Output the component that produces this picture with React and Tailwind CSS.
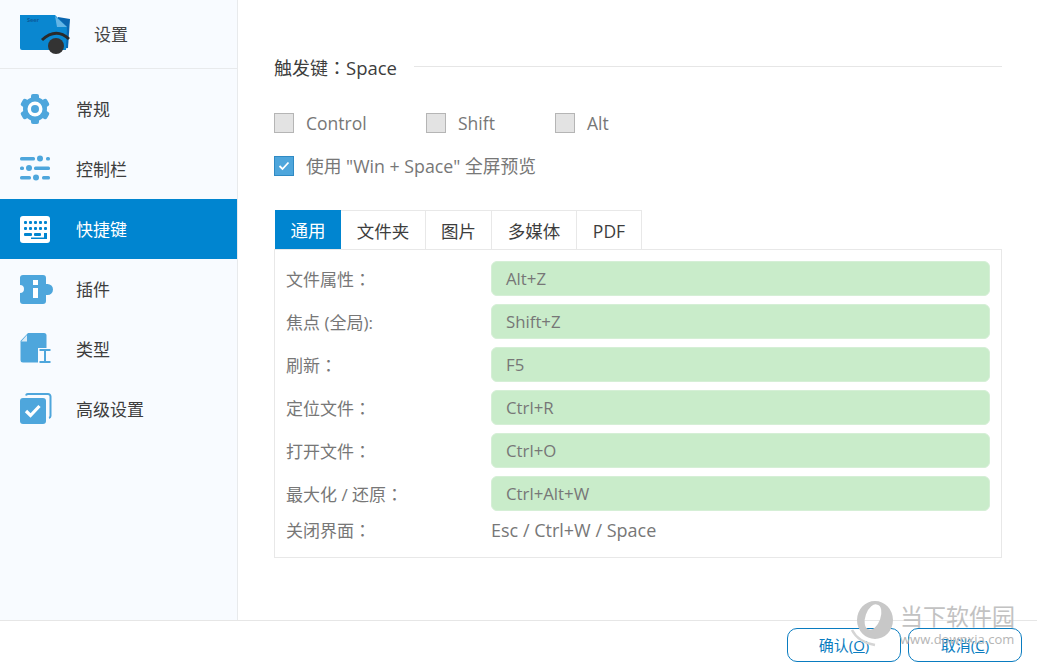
import React from "react";

const font = { fontFamily: '"Open Sans", "Noto Sans CJK SC", sans-serif' };

function GearIcon() {
  return (
    <svg width="32" height="32" viewBox="0 0 32 32">
      <g fill="#4ea6dc">
        {[0, 60, 120, 180, 240, 300].map((deg) => (
          <rect key={deg} x="12" y="1" width="8" height="8" rx="2" transform={`rotate(${deg} 16 16)`} />
        ))}
        <circle cx="16" cy="16" r="12" />
      </g>
      <circle cx="16" cy="16" r="7.500" fill="#fff" />
      <circle cx="16" cy="16" r="4" fill="#4ea6dc" />
    </svg>
  );
}

function SlidersIcon() {
  return (
    <svg width="32" height="32" viewBox="0 0 32 32" fill="#4ea6dc">
      <rect x="1" y="4" width="15" height="3.500" rx="1.500" />
      <circle cx="21" cy="5.500" r="3" />
      <rect x="27" y="4" width="4" height="3.500" rx="1.500" />
      <rect x="1" y="13.500" width="4" height="3.500" rx="1.500" />
      <circle cx="10" cy="15" r="3" />
      <rect x="15" y="13.500" width="16" height="3.500" rx="1.500" />
      <rect x="1" y="23" width="11" height="3.500" rx="1.500" />
      <circle cx="17" cy="24.500" r="3" />
      <rect x="23" y="23" width="8" height="3.500" rx="1.500" />
    </svg>
  );
}

function KeyboardIcon() {
  return (
    <svg width="32" height="32" viewBox="0 0 32 32">
      <rect x="1" y="3" width="30" height="27" rx="3" fill="#fff" />
      <g fill="#0085d0">
        <rect x="5" y="8" width="3" height="3" rx="1" />
        <rect x="10" y="8" width="3" height="3" rx="1" />
        <rect x="15" y="8" width="3" height="3" rx="1" />
        <rect x="20" y="8" width="3" height="3" rx="1" />
        <rect x="25" y="8" width="3" height="3" rx="1" />
        <rect x="5" y="14" width="3" height="3" rx="1" />
        <rect x="10" y="14" width="3" height="3" rx="1" />
        <rect x="15" y="14" width="3" height="3" rx="1" />
        <rect x="20" y="14" width="3" height="3" rx="1" />
        <rect x="25" y="14" width="3" height="3" rx="1" />
        <rect x="5" y="20" width="8" height="3" rx="1" />
        <rect x="15" y="20" width="7" height="3" rx="1" />
        <path d="M25 20h3v6h-16v-1.500h13z" />
      </g>
    </svg>
  );
}

function PuzzleIcon() {
  return (
    <svg width="34" height="32" viewBox="0 0 34 32">
      <path
        fill="#4ea6dc"
        d="M4 2h20a3 3 0 0 1 3 3v6h1.500a5.500 5.500 0 0 1 0 11H27v6a3 3 0 0 1-3 3H4a3 3 0 0 1-3-3v-8a4 4 0 0 0 0-8V5a3 3 0 0 1 3-3z"
      />
      <rect x="14" y="7" width="5" height="5" fill="#fff" />
      <rect x="14" y="15" width="5" height="10" fill="#fff" />
    </svg>
  );
}

function FileTypeIcon() {
  return (
    <svg width="34" height="32" viewBox="0 0 34 32">
      <path
        fill="#4ea6dc"
        d="M9 0h16a2.500 2.500 0 0 1 2.500 2.500V27a2.500 2.500 0 0 1-2.500 2.500H4A2.500 2.500 0 0 1 1.500 27V8z"
      />
      <path fill="#dcebf6" d="M8 2v6.500H2.200z" />
      <rect x="19" y="15" width="15" height="17" fill="#f8fbff" />
      <path fill="#4ea6dc" d="M20.500 16h11v2H27v10h4.500v2h-11v-2H25V18h-4.500z" />
    </svg>
  );
}

function CheckCopyIcon() {
  return (
    <svg width="34" height="32" viewBox="0 0 34 32">
      <path
        fill="none"
        stroke="#4ea6dc"
        strokeWidth="2"
        d="M7 2.500A2 2 0 0 1 9 1h20a2.500 2.500 0 0 1 2.500 2.500V23a2 2 0 0 1-1.500 2"
      />
      <rect x="1" y="5" width="26" height="26" rx="3" fill="#4ea6dc" />
      <path d="M7 18l4.500 4.500 9-9.500" fill="none" stroke="#fff" strokeWidth="3.200" />
    </svg>
  );
}

function LogoIcon() {
  return (
    <svg width="54" height="44" viewBox="0 0 54 44">
      <path fill="#0a66b0" d="M40 5l12 2-2 29-10 1z" />
      <path fill="#0a87d0" d="M2 3h35l12 12-1 23-44 0a2 2 0 0 1-2-2z" />
      <path fill="#64b5e6" d="M37 4l12 11H39z" />
      <text x="9" y="10" fontSize="5.500" fontWeight="700" fill="#0a5a9a">
        Seer
      </text>
      <path d="M24 28Q38 15 51 27" fill="none" stroke="#2a2a2a" strokeWidth="3" />
      <circle cx="38" cy="34" r="8" fill="#333" />
    </svg>
  );
}

function WatermarkLogo() {
  return (
    <svg width="44" height="50" viewBox="0 0 44 50">
      <path
        fill="#c8c8c8"
        fillRule="evenodd"
        d="M7 20A18 19 0 1 1 43 20A18 19 0 1 1 7 20zM27.400 4.800A7 13 20 1 0 18.600 29.200A7 13 20 1 0 27.400 4.800z"
      />
      <path d="M2 30Q8 42 25 45" fill="none" stroke="#d5d5d5" strokeWidth="2.500" />
    </svg>
  );
}

// centred full-width colon, the SC face pushes it to the left
function Colon() {
  return <span style={{ fontFamily: '"Noto Sans CJK TC", sans-serif' }}>：</span>;
}

const navItems = [
  { label: "常规", Icon: GearIcon },
  { label: "控制栏", Icon: SlidersIcon },
  { label: "快捷键", Icon: KeyboardIcon, active: true },
  { label: "插件", Icon: PuzzleIcon },
  { label: "类型", Icon: FileTypeIcon },
  { label: "高级设置", Icon: CheckCopyIcon },
];

const tabs = [
  { label: "通用", width: "w-[66px]", active: true },
  { label: "文件夹", width: "w-[85px]" },
  { label: "图片", width: "w-[66px]" },
  { label: "多媒体", width: "w-[85px]" },
  { label: "PDF", width: "w-[65px]" },
];

const shortcuts = [
  { label: "文件属性", colon: true, keys: "Alt+Z" },
  { label: "焦点 (全局):", keys: "Shift+Z" },
  { label: "刷新", colon: true, keys: "F5" },
  { label: "定位文件", colon: true, keys: "Ctrl+R" },
  { label: "打开文件", colon: true, keys: "Ctrl+O" },
  { label: "最大化 / 还原", colon: true, keys: "Ctrl+Alt+W" },
];

function Check({ label, width }) {
  return (
    <label className={`flex items-center ${width}`}>
      <span className="w-5 h-5 bg-[#e3e3e3] border border-[#b5b5b5]" />
      <span className="ml-3 text-[17.500px] text-[#777777]">{label}</span>
    </label>
  );
}

export default function App() {
  return (
    <div
      style={font}
      className="w-[1037px] h-[667px] flex flex-col bg-white overflow-hidden relative"
    >
      <div className="flex flex-1 min-h-0">
        {/* Sidebar */}
        <aside className="w-[238px] shrink-0 bg-[#f8fbff] border-r border-[#e8eaec]">
          <div className="h-[69px] flex items-center pl-[18px] border-b border-[#e8eaec]">
            <LogoIcon />
            <span className="ml-[22px] mt-[2px] text-[17px] text-[#444444]">设置</span>
          </div>
          <nav className="mt-[10px]">
            {navItems.map(({ label, Icon, active }) => (
              <div
                key={label}
                className={`h-[60px] flex items-center pl-[19px] ${
                  active ? "bg-[#0085d0] text-white" : "text-[#3d3d3d]"
                }`}
              >
                <span className="w-[57px] shrink-0 flex">
                  <Icon />
                </span>
                <span className="mt-[2px] text-[17px]">{label}</span>
              </div>
            ))}
          </nav>
        </aside>

        {/* Main */}
        <main className="flex-1 pl-9 pr-[35px] pt-[55px]">
          <div className="flex items-center h-[26px]">
            <span className="text-[18px] text-[#3d3d3d] whitespace-nowrap">
              触发键<Colon /><span className="text-[18.500px]">Space</span>
            </span>
            <span className="ml-[17px] flex-1 -mt-[4px] border-t border-[#e6e6e6]" />
          </div>

          <div className="flex mt-[31px] h-[22px] items-center">
            <Check label="Control" width="w-[152px]" />
            <Check label="Shift" width="w-[129px]" />
            <Check label="Alt" width="w-[100px]" />
          </div>

          <div className="flex items-center mt-[21px] h-[22px]">
            <span className="w-5 h-5 flex items-center justify-center bg-[#4ea6dc] border border-[#2f8ac4]">
              <svg width="12" height="10" viewBox="0 0 12 10">
                <path d="M1.500 5l3 3 6-6.500" fill="none" stroke="#fff" strokeWidth="1.800" />
              </svg>
            </span>
            <span className="ml-3 text-[17.750px] text-[#777777]">使用 "Win + Space" 全屏预览</span>
          </div>

          {/* Tabs */}
          <div className="flex mt-[33px] ml-px h-[39px]">
            {tabs.map((tab) => (
              <div
                key={tab.label}
                className={`${tab.width} flex items-center justify-center pt-[2px] text-[17.500px] ${
                  tab.active
                    ? "bg-[#0085d0] text-white"
                    : "border-t border-r border-[#e8e8e8] text-[#3d3d3d]"
                }`}
              >
                {tab.label}
              </div>
            ))}
          </div>

          <div className="h-[309px] border border-[#e8e8e8] pl-[11px] pr-[11px] pt-[11px]">
            {shortcuts.map((row) => (
              <div key={row.keys} className="flex items-center h-[35px] mb-2">
                <span className="w-[205px] shrink-0 mt-[2px] text-[17px] text-[#777777]">
                  {row.label}
                  {row.colon && <Colon />}
                </span>
                <div className="flex-1 h-[35px] flex items-center pl-[14px] bg-[#c9ecca] rounded-md border border-[#d5efd6] text-[16.800px] text-[#777777]">
                  {row.keys}
                </div>
              </div>
            ))}
            <div className="flex items-center h-6 -mt-[1px]">
              <span className="w-[205px] shrink-0 text-[17px] text-[#777777]">
                关闭界面<Colon />
              </span>
              <span className="text-[18px] text-[#777777]">Esc / Ctrl+W / Space</span>
            </div>
          </div>
        </main>
      </div>

      {/* Footer */}
      <footer className="h-[47px] shrink-0 border-t border-[#e6e6e6] bg-white flex justify-end gap-[7px] pr-[15px] pt-[7px]">
        <button className="w-[114px] h-[34px] rounded-[10px] border border-[#0a7cc0] text-[15px] text-[#0a7cc0]">
          确认(<u>O</u>)
        </button>
        <button className="w-[114px] h-[34px] rounded-[10px] border border-[#0a7cc0] text-[15px] text-[#0a7cc0]">
          取消(<u>C</u>)
        </button>
      </footer>

      {/* Watermark */}
      <div className="absolute left-[850px] top-[600px] flex pointer-events-none">
        <WatermarkLogo />
        <div className="ml-[6px] mt-[2px] flex flex-col">
          <span className="text-[23px] leading-[28px] text-[#c2c2c2]">当下软件园</span>
          <span className="mt-[1px] text-[13px] leading-[16px] text-[#b5b5b5]">www.downxia.com</span>
        </div>
      </div>
    </div>
  );
}
